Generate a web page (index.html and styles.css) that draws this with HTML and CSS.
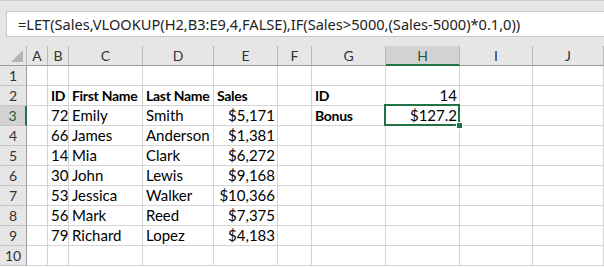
FILE: index.html
```html
<!DOCTYPE html>
<html lang="en">
<head>
    <meta charset="UTF-8">
    <title>LET Function</title>
    <link rel="stylesheet" href="styles.css">
</head>
<body>
    <div class="formula-area">
        <div class="formula-box">=LET(Sales,VLOOKUP(H2,B3:E9,4,FALSE),IF(Sales&gt;5000,(Sales-5000)*0.1,0))</div>
    </div>
    <div class="sheet">
        <div class="hd corner"><span class="tri"></span></div>
        <div class="hd">A</div>
        <div class="hd">B</div>
        <div class="hd">C</div>
        <div class="hd">D</div>
        <div class="hd">E</div>
        <div class="hd">F</div>
        <div class="hd">G</div>
        <div class="hd sel">H</div>
        <div class="hd">I</div>
        <div class="hd">J</div>

        <div class="rh">1</div>
        <div class="c"></div><div class="c"></div><div class="c"></div><div class="c"></div><div class="c"></div>
        <div class="c"></div><div class="c"></div><div class="c"></div><div class="c"></div><div class="c"></div>

        <div class="rh">2</div>
        <div class="c"></div>
        <div class="c b">ID</div>
        <div class="c b">First Name</div>
        <div class="c b">Last Name</div>
        <div class="c b">Sales</div>
        <div class="c"></div>
        <div class="c b">ID</div>
        <div class="c r">14</div>
        <div class="c"></div><div class="c"></div>

        <div class="rh sel">3</div>
        <div class="c"></div>
        <div class="c r">72</div>
        <div class="c">Emily</div>
        <div class="c">Smith</div>
        <div class="c r">$5,171</div>
        <div class="c"></div>
        <div class="c b">Bonus</div>
        <div class="c r active">$127.2<span class="handle"></span></div>
        <div class="c"></div><div class="c"></div>

        <div class="rh">4</div>
        <div class="c"></div>
        <div class="c r">66</div>
        <div class="c">James</div>
        <div class="c">Anderson</div>
        <div class="c r">$1,381</div>
        <div class="c"></div><div class="c"></div><div class="c"></div><div class="c"></div><div class="c"></div>

        <div class="rh">5</div>
        <div class="c"></div>
        <div class="c r">14</div>
        <div class="c">Mia</div>
        <div class="c">Clark</div>
        <div class="c r">$6,272</div>
        <div class="c"></div><div class="c"></div><div class="c"></div><div class="c"></div><div class="c"></div>

        <div class="rh">6</div>
        <div class="c"></div>
        <div class="c r">30</div>
        <div class="c">John</div>
        <div class="c">Lewis</div>
        <div class="c r">$9,168</div>
        <div class="c"></div><div class="c"></div><div class="c"></div><div class="c"></div><div class="c"></div>

        <div class="rh">7</div>
        <div class="c"></div>
        <div class="c r">53</div>
        <div class="c">Jessica</div>
        <div class="c">Walker</div>
        <div class="c r">$10,366</div>
        <div class="c"></div><div class="c"></div><div class="c"></div><div class="c"></div><div class="c"></div>

        <div class="rh">8</div>
        <div class="c"></div>
        <div class="c r">56</div>
        <div class="c">Mark</div>
        <div class="c">Reed</div>
        <div class="c r">$7,375</div>
        <div class="c"></div><div class="c"></div><div class="c"></div><div class="c"></div><div class="c"></div>

        <div class="rh">9</div>
        <div class="c"></div>
        <div class="c r">79</div>
        <div class="c">Richard</div>
        <div class="c">Lopez</div>
        <div class="c r">$4,183</div>
        <div class="c"></div><div class="c"></div><div class="c"></div><div class="c"></div><div class="c"></div>

        <div class="rh">10</div>
        <div class="c"></div><div class="c"></div><div class="c"></div><div class="c"></div><div class="c"></div>
        <div class="c"></div><div class="c"></div><div class="c"></div><div class="c"></div><div class="c"></div>
    </div>
</body>
</html>
```

FILE: styles.css
```css
body {
    margin: 0;
    width: 604px;
    height: 267px;
    overflow: hidden;
    background-color: #fff;
    font-family: Lato, "Liberation Sans", sans-serif;
}
.formula-area {
    background-color: #e6e6e6;
    border-top: 1px solid #d0d0d0;
    height: 46px;
    padding: 10px 0 0 6px;
    box-sizing: border-box;
}
.formula-box {
    height: 26px;
    box-sizing: border-box;
    background-color: #fff;
    border: 1px solid #c6c6c6;
    border-right: none;
    padding-left: 11px;
    font-family: "Noto Sans", sans-serif;
    font-size: 14.6px;
    line-height: 24px;
    color: #222;
    white-space: nowrap;
}
.sheet {
    display: grid;
    grid-template-columns: 27px 21px 21px 74px 71px 64px 34px 74px 74px 73px 71px;
    grid-auto-rows: 20px;
    font-size: 15px;
    color: #000;
}
.sheet > div {
    box-sizing: border-box;
    white-space: nowrap;
    overflow: visible;
    line-height: 19px;
}
.hd {
    background-color: #e6e6e6;
    border-right: 1px solid #b8b8b8;
    border-bottom: 1px solid #9b9b9b;
    text-align: center;
    color: #333;
    font-size: 14px;
}
.hd.sel {
    background-color: #d2d2d2;
    border-bottom: 2px solid #217346;
    color: #1c5a38;
}
.corner {
    position: relative;
}
.tri {
    position: absolute;
    right: 3px;
    bottom: 3px;
    width: 0;
    height: 0;
    border-left: 12px solid transparent;
    border-bottom: 12px solid #b4b4b4;
}
.rh {
    background-color: #e6e6e6;
    border-right: 1px solid #9b9b9b;
    border-bottom: 1px solid #c6c6c6;
    text-align: center;
    color: #333;
    font-size: 14px;
}
.rh.sel {
    background-color: #d2d2d2;
    border-right: 2px solid #217346;
    color: #1c5a38;
}
.c {
    border-right: 1px solid #d4d4d4;
    border-bottom: 1px solid #d4d4d4;
    padding: 0 2px 0 3px;
}
.b {
    font-weight: bold;
    font-size: 14px;
    letter-spacing: -0.3px;
}
.r {
    text-align: right;
}
.active {
    position: relative;
}
.active::after {
    content: "";
    position: absolute;
    left: -2px;
    top: -2px;
    right: -1px;
    bottom: -1px;
    border: 2px solid #217346;
}
.handle {
    position: absolute;
    right: -4px;
    bottom: -4px;
    width: 5px;
    height: 5px;
    background-color: #217346;
    border: 1px solid #fff;
    z-index: 1;
}
```
